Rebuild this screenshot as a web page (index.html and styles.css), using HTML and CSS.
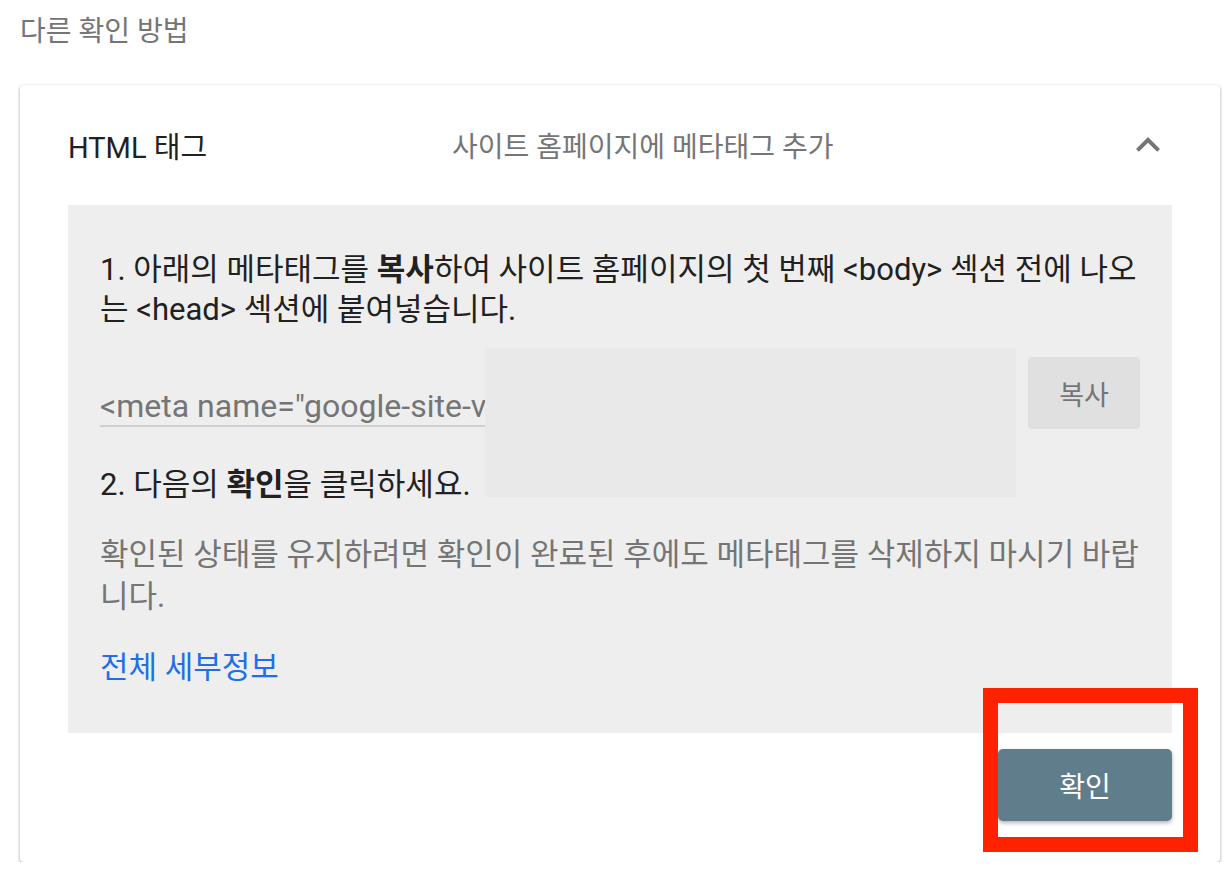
FILE: index.html
```html
<!DOCTYPE html>
<html lang="ko">
<head>
<meta charset="utf-8">
<title>다른 확인 방법</title>
<link rel="stylesheet" href="styles.css">
</head>
<body>
<div class="page">
  <h2 class="section-title">다른 확인 방법</h2>
  <div class="card">
    <div class="card-header">
      <div class="method-name">HTML 태그</div>
      <div class="method-desc">사이트 홈페이지에 메타태그 추가</div>
      <div class="chevron">
        <svg width="48" height="48" viewBox="0 0 24 24"><path d="M12 8l-6 6 1.41 1.41L12 10.83l4.59 4.58L18 14z" fill="#757575"/></svg>
      </div>
    </div>
    <div class="panel">
      <p class="step">1. 아래의 메타태그를 <b>복사</b>하여 사이트 홈페이지의 첫 번째 &lt;body&gt; 섹션 전에 나오는 &lt;head&gt; 섹션에 붙여넣습니다.</p>
      <div class="input-row">
        <input class="meta-input" type="text" readonly value='&lt;meta name="google-site-verification" content="xxxxxxxxxxxxxxxx" /&gt;'>
        <button class="copy-btn">복사</button>
        <div class="redact"></div>
      </div>
      <p class="step step2">2. 다음의 <b>확인</b>을 클릭하세요.</p>
      <p class="note">확인된 상태를 유지하려면 확인이 완료된 후에도 메타태그를 삭제하지 마시기 바랍니다.</p>
      <a class="details" href="#">전체 세부정보</a>
    </div>
    <div class="card-footer">
      <button class="verify-btn">확인</button>
    </div>
    <div class="highlight"></div>
  </div>
</div>
</body>
</html>
```

FILE: styles.css
```css
html, body {
  margin: 0;
  padding: 0;
  background: #ffffff;
}
body {
  font-family: Roboto, "Noto Sans CJK KR", sans-serif;
  color: #212121;
}
.page {
  padding: 12px 8px 0 20px;
}
.section-title {
  margin: 0 0 33px 0;
  font-size: 28px;
  line-height: 40px;
  font-weight: 400;
  color: #757575;
}
.card {
  position: relative;
  width: 1200px;
  height: 777px;
  background: #fff;
  border-radius: 4px;
  box-shadow: 0 1px 3px rgba(0,0,0,0.28), 0 2px 4px rgba(0,0,0,0.12);
  display: flex;
  flex-direction: column;
}
.card-header {
  height: 120px;
  display: flex;
  align-items: center;
  padding: 0 48px;
}
.method-name {
  width: 384px;
  flex: none;
  font-size: 29px;
  color: #212121;
}
.method-desc {
  flex: 1;
  font-size: 28px;
  color: #757575;
}
.chevron {
  width: 48px;
  height: 48px;
  flex: none;
}
.chevron svg { display: block; }
.panel {
  margin: 0 48px;
  background: #eeeeee;
  padding: 45px 32px 45px 32px;
  display: flex;
  flex-direction: column;
  align-items: flex-start;
}
.step, .note {
  margin: 0;
  font-size: 31px;
  line-height: 40px;
  width: 1040px;
}
.step b { font-weight: 700; }
.input-row {
  position: relative;
  margin-top: 27px;
  width: 1040px;
  display: flex;
  gap: 12px;
  height: 72px;
}
.meta-input {
  flex: 1;
  min-width: 0;
  height: 70px;
  box-sizing: border-box;
  border: none;
  border-bottom: 2px solid #d0d0d0;
  background: transparent;
  outline: none;
  font-family: Roboto, "Noto Sans CJK KR", sans-serif;
  font-size: 32px;
  line-height: 40px;
  padding: 30px 0 0 0;
  margin: 0;
  color: #757575;
}
.copy-btn {
  width: 112px;
  height: 72px;
  flex: none;
  border: none;
  border-radius: 4px;
  background: #e0e0e0;
  color: #757575;
  font-family: Roboto, "Noto Sans CJK KR", sans-serif;
  font-size: 27px;
  padding: 0;
}
.redact {
  position: absolute;
  left: 385px;
  top: -9px;
  width: 531px;
  height: 149px;
  background: #e9e9e9;
}
.step2 {
  margin-top: 36px;
}
.note {
  margin-top: 29px;
  color: #757575;
  line-height: 42px;
}
.details {
  margin-top: 30px;
  font-size: 31px;
  line-height: 40px;
  color: #1f6fe8;
  text-decoration: none;
}
.card-footer {
  flex: 1;
  display: flex;
  justify-content: flex-end;
  align-items: flex-start;
  padding: 16px 48px 0 0;
}
.verify-btn {
  width: 174px;
  height: 72px;
  border: none;
  border-radius: 5px;
  background: #607d8b;
  color: #ffffff;
  font-family: Roboto, "Noto Sans CJK KR", sans-serif;
  font-size: 28px;
  box-shadow: 0 2px 4px rgba(0,0,0,0.3);
  padding: 0;
}
.highlight {
  position: absolute;
  left: 963px;
  top: 603px;
  width: 185px;
  height: 134px;
  border: 15px solid #ff2200;
}
```
